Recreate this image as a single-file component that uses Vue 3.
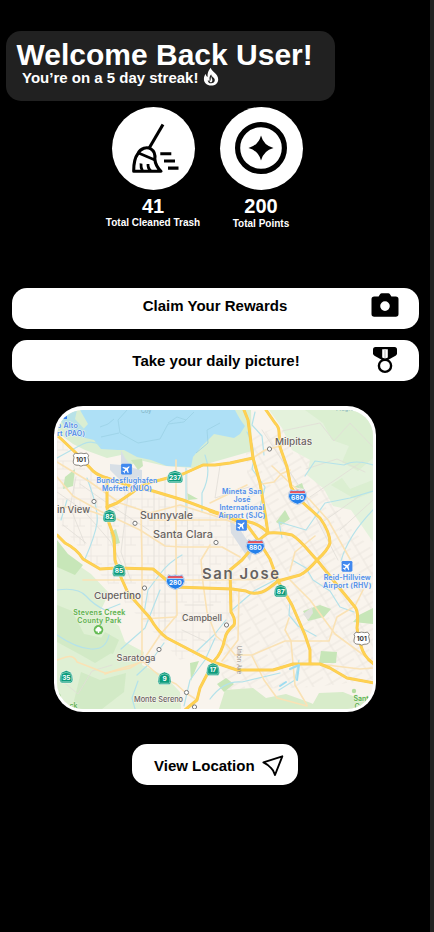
<script setup>
const freeways = [
  'M57 435L75 452L93 471Q99 476 107 478L133 487L153 491L183 500L215 512L230 517L253 523Q263 527 268 533Q280 532 292 535C302 541 309 552 317 560L337 585L355 607Q359 612 357 628Q360 648 365 655Q368 660 374 664',
  'M107 507L117 503Q126 497 133 492Q142 483 160 480L183 474L203 465L215 465L230 463L253 458',
  'M244 410L248 420L253 458L260 483L265 513L268 533Q258 540 253 547L242 560L230 570L231 612Q236 620 234 625Q226 632 225 638Q222 653 214 661L200 688L197 700L185 710',
  'M266 410L275 423Q279 427 279 432L280 447L287 467L291 487L300 500L320 518Q330 532 330 543Q328 550 317 560Q308 571 300 575L278 581Q266 591 262 592Q252 595 246 591L232 589L175 587L153 569L117 568L100 569L83 559Q77 549 65 543L57 535',
  'M107 478L107 507L109 523L114 537L115 560L119 573L128 593L150 618Q158 632 167 638L190 650L213 662L237 670L273 670L293 664L320 664L330 668L347 678L374 683',
  'M210 511L230 518L247 525L258 540L270 559L278 581L292 605L305 635L310 650L310 663',
]
const arterials = [
  'M57 462L90 482L120 503L150 513L180 505L215 516L235 523',
  'M57 477L73 496L100 511L140 530L165 546L182 547H222L240 557',
  'M57 507Q84 507 104 516',
  'M253 458L265 450L284 445',
  'M262 484L274 482L281 474L290 470M272 466L292 485L310 500L328 520L350 559',
  'M176 460V505V552L177 615L160 635L142 662L116 670L105 674',
  'M141 515L142 560V661L161 677L176 684L186 693L197 700',
  'M210 545L201 560L203 583L207 612L216 636L227 645',
  'M57 660L66 657Q74 655 77 662L90 667L105 673L130 668L142 661',
  'M83 580H210L280 579M150 520H228M142 619L176 617',
  'M227 645L235 655H252L285 641H329L337 617L355 606L363 590',
  'M290 580L310 600L335 634L373 662M289 618L285 630L291 641L293 664L295 685L307 705',
  'M252 656L264 680L277 698L307 706M239 590L238 640L222 661M310 663L360 669L373 668',
  'M210 503L247 485M290 571L295 552L315 536',
]
const creeks = [
  'M101 445Q91 440 83 444T57 458M87 478Q99 510 97 523T85 559M67 500L61 520',
  'M247 432Q257 450 252 469L265 487L260 507M255 412L252 425L262 436L264 455',
  'M57 590Q78 587 86 596T105 610L120 604M57 635Q76 648 91 649T109 635M182 555Q169 562 160 574L148 590L144 613M160 590L145 628L121 649M164 643L148 665L137 675',
  'M186 468V512M205 455Q212 474 202 493V512M373 465Q355 459 344 465L315 461L305 476M373 510Q348 536 341 561M373 491L350 498L325 503L315 517L306 530L279 522L282 538',
  'M210 699Q224 680 242 682L280 673M197 651L214 635L226 620M232 610L254 591L275 580M276 580L290 602L289 615L298 626L316 636M299 660L295 680L279 690',
  'M292 560L306 568L313 580L330 591L340 607L354 612M135 709L132 698L138 681M184 706L190 680L205 660L215 638',
]
const towns = [
  { t: 'Milpitas', x: 275, y: 445, w: 37, s: 9.3 },
  { t: 'Sunnyvale', x: 140, y: 519, w: 53, s: 10 },
  { t: 'Santa Clara', x: 153, y: 538, w: 60, s: 10 },
  { t: 'in View', x: 57, y: 512.5, w: 33, s: 9.5 },
  { t: 'Cupertino', x: 94, y: 599, w: 47, s: 9.5 },
  { t: 'Campbell', x: 182, y: 621, w: 40, s: 9 },
  { t: 'Saratoga', x: 116.5, y: 660.5, w: 39, s: 9.1 },
  { t: 'Monte Sereno', x: 134, y: 701.5, w: 49, s: 7.6 },
]
const dots = [[94, 501.5], [135, 523.3], [216, 542.5], [269.5, 449], [144.5, 588], [226.5, 625], [159, 649.5], [186.5, 692.5], [194.5, 707]]
const airports = [
  { lines: ['o Alto', 'rt (PAO)'], x: 57, y: 427.8, a: 'start' },
  { lines: ['Bundesflughafen', 'Moffett (NUQ)'], x: 127, y: 482.5, a: 'middle' },
  { lines: ['Mineta San', 'José', 'International', 'Airport (SJC)'], x: 242, y: 493.5, a: 'middle' },
  { lines: ['Reid-Hillview', 'Airport (RHV)'], x: 347.3, y: 579.5, a: 'middle' },
]
const planes = [[126.5, 469.2], [241.5, 525.3], [347, 566.3]]
const stateRoutes = [
  { n: '237', x: 175, y: 477 }, { n: '82', x: 109.5, y: 516 }, { n: '85', x: 119, y: 570.5 },
  { n: '87', x: 280.7, y: 591 }, { n: '17', x: 213, y: 669.5 }, { n: '9', x: 164.5, y: 678.5 }, { n: '35', x: 66.3, y: 677 },
]
const interstates = [{ n: '680', x: 297.5, y: 497 }, { n: '880', x: 255.3, y: 547 }, { n: '280', x: 175.3, y: 582 }]
const usRoutes = [[81, 459.5], [361.7, 638.5]]
</script>

<template>
  <main class="screen">
    <header class="welcome">
      <h1>Welcome Back User!</h1>
      <p>
        You’re on a 5 day streak!
        <svg class="flame" viewBox="0 0 16 20">
          <path d="M7.8 .8C8.1 4.2 15.2 6.6 15.2 12.2C15.2 16.2 12.2 18.6 8.1 18.6S.9 16 .9 12.1C.9 9.6 1.8 7.9 2.8 7C3 8.5 3.6 9.5 4.6 10C4.3 6.4 5.2 3.2 7.8 .8Z" fill="#fff" />
          <path d="M8.2 7.2C8 9.7 12 10.4 11.8 13.3C11.7 15.2 10.2 16.3 8.2 16.3C6 16.3 4.7 14.9 4.8 12.9C5.5 13.7 6.1 13.9 6.8 13.6C6.1 11.2 6.4 9 8.2 7.2Z" fill="#212121" />
          <path d="M8.3 9.3C8.1 11.3 9.8 12.3 9.3 14C8.9 15.2 7.5 15.6 6.4 14.8C8.3 13.8 7.3 11.3 8.3 9.3Z" fill="#fff" />
        </svg>
      </p>
    </header>

    <section class="stats">
      <div class="stat trash">
        <div class="disc">
          <svg viewBox="0 0 83 83" fill="none" stroke="#000" stroke-width="3.1">
            <path d="M51 17.5L37.2 41" />
            <path d="M26 46.5C28.5 41 35 39.5 39 42C43 44.5 43.3 48 42.8 52C43.3 57.5 45.5 61 49 64.3H21.7C21.6 57 22.5 51 26 46.5Z" stroke-linejoin="round" />
            <path d="M26.5 46L43 53" stroke-width="2.6" />
            <path d="M29 56.5Q28.6 60.5 30.5 64M36 57Q35.7 61.5 39 64" stroke-width="2.8" />
            <path d="M48.3 46.8H59.3M52 54H63M56 61.1H66.5" />
          </svg>
        </div>
        <strong>41</strong>
        <span>Total Cleaned Trash</span>
      </div>
      <div class="stat points">
        <div class="disc">
          <svg viewBox="0 0 83 83">
            <circle cx="41" cy="41" r="23.4" fill="none" stroke="#000" stroke-width="5.2" />
            <path d="M41 28.5Q43.6 38.4 53.5 41Q43.6 43.6 41 53.5Q38.4 43.6 28.5 41Q38.4 38.4 41 28.5Z" />
          </svg>
        </div>
        <strong>200</strong>
        <span>Total Points</span>
      </div>
    </section>

    <nav class="actions">
      <button class="action rewards">
        <span>Claim Your Rewards</span>
        <svg viewBox="0 0 28 28">
          <path fill-rule="evenodd" d="M3.2 4.5H7.6L9.2 2.1Q9.7 1.3 10.7 1.3H17.3Q18.3 1.3 18.8 2.1L20.4 4.5H24.8Q27.5 4.5 27.5 7.2V22Q27.5 24.7 24.8 24.7H3.2Q.5 24.7 .5 22V7.2Q.5 4.5 3.2 4.5ZM14 9.3A4.8 4.8 0 1 0 14 18.9A4.8 4.8 0 1 0 14 9.3Z" />
        </svg>
      </button>
      <button class="action daily">
        <span>Take your daily picture!</span>
        <svg viewBox="0 0 28 28">
          <path d="M4.5 1H23.5Q26 1 26 3.5V7.2Q26 8.8 24.5 9.8L17 14H11L3.5 9.8Q2 8.8 2 7.2V3.5Q2 1 4.5 1Z" />
          <path d="M11.2 3.2H16.8V11.5L14 12.7L11.2 11.5Z" fill="#fff" />
          <path d="M13 3.4H15V12H13Z" fill="#d9d9d9" />
          <circle cx="14" cy="19.8" r="6.1" fill="#fff" stroke="#000" stroke-width="2.4" />
        </svg>
      </button>
    </nav>

    <div class="map">
      <svg viewBox="57 410 316 299">
        <defs>
          <pattern id="westGrid" width="17" height="19" patternUnits="userSpaceOnUse">
            <path d="M0 5H17M6 0V19M6 13H17M12 5V13" fill="none" stroke="#ebe6df" stroke-width=".8" />
          </pattern>
          <pattern id="eastGrid" width="18" height="16" patternUnits="userSpaceOnUse" patternTransform="rotate(-31)">
            <path d="M0 4H18M5 0V16M5 11H18" fill="none" stroke="#e8e3dc" stroke-width=".8" />
          </pattern>
        </defs>
        <rect x="57" y="410" width="316" height="299" fill="#f9f4ed" />
        <path d="M57 440L75 449L96 472L130 487L245 525L227 645L180 660L113 590L57 520Z" fill="url(#westGrid)" />
        <path d="M245 440L284 424L317 466L342 520L373 550V680L315 687L220 690L232 570L251 525Z" fill="url(#eastGrid)" />
        <path d="M57 410H251L252 451L217 461L193 468L165 466L139 460L130 466L121 455L107 458L85 450L73 444L57 432Z" fill="#daeed2" />
        <path d="M269 410H373V542L362 526L351 510L333 506L324 489L307 475L310 460L292 450L282 428Z" fill="#e4f2dc" />
        <path d="M305 410L323 423L332 440L349 446L342 462L358 471L373 458V410ZM331 485L342 478L350 489L373 480V492L355 499Z" fill="#d6edcb" opacity=".65" />
        <path d="M57 562L78 565L91 574L109 593L100 612L119 626L125 642L144 652L142 665L165 676L180 692L181 709H57Z" fill="#dff0d4" />
        <path d="M57 605L72 611L84 634L103 638L113 652L95 663L81 655L57 642ZM105 632L119 640L113 654L94 649ZM81 672L100 680L126 673L124 692L102 709H72Z" fill="#cee9c2" opacity=".8" />
        <path d="M219 709L225 690L253 688L266 698L286 694L311 703L322 709ZM310 709L319 693L343 692L373 704V709Z" fill="#d8ecca" />
        <path d="M57 540L68 554L83 565L75 575L57 567ZM65 477L75 469L73 486L63 489ZM187 493L198 499L188 500ZM110 532L116 529L120 543L113 545ZM276 522L285 510L290 519L281 525ZM294 487L302 483L304 489ZM303 611L320 605L331 609L324 617L308 621ZM321 651L337 652L336 663H319ZM359 615L373 608V624L353 622ZM190 663L199 661L191 681ZM217 684L226 678L234 684L224 692Z" fill="#c7e6b8" />
        <path d="M80 410H235Q240 420 245 426L240 434L234 438L214 434L201 447L193 457L191 467L167 466L151 460L137 457L124 450L118 450L101 449L94 440L77 436L88 424Z" fill="#aee0f6" />
        <path d="M57 410H77L75 419L87 432L72 435L60 420Z" fill="#b8e2e8" />
        <path d="M127 410L118 420L120 433L138 443L160 439L168 424L184 422L194 412M168 423L177 417L186 420M100 427L108 424L114 419M101 437L119 433M196 453L208 443L207 430L220 423" fill="none" stroke="#9dd2e6" stroke-width=".9" />
        <path d="M121 450L125 458L133 468L142 470L142 480L120 480L110 470L110 464L121 465Z" fill="#d8dfe6" />
        <path d="M230 520L239 528L253 549L250 561L231 533Z" fill="#d8dee5" />
        <path d="M131 460L142 459L143 466L138 470Z" fill="#cbe6bd" />
        <path d="M303 614L312 607L313 613L308 620Z" fill="#e2e2dd" />
        <g fill="none" stroke-linecap="round" stroke-linejoin="round">
          <path d="M57 492L83 510L110 541L122 565M80 484L113 507L149 530M63 525L86 543M76 477L70 507L85 544M130 478L121 552L131 581M154 491V616M165 480L165 632M187 470L188 576M61 680L78 694L92 671L112 665M182 630L207 642M185 605H213M220 466L215 498L249 487M262 430L301 489L338 560M282 431L320 423L334 441L350 423L373 447M306 469L337 459L365 472M310 497L363 461M324 521L361 495M340 530L373 500" stroke="#e1ddd7" stroke-width=".8" />
          <path v-for="d in creeks" :key="d" :d="d" stroke="#b4e2ea" stroke-width="1.2" />
          <path v-for="d in arterials" :key="d" :d="d" stroke="#fae2b5" stroke-width="1.6" />
          <path v-for="d in freeways" :key="d" :d="d" stroke="#f8ca55" stroke-width="3" />
          <path v-for="d in freeways" :key="'i' + d" :d="d" stroke="#ffd251" stroke-width="2" />
          <path d="M290 669L299 665L297 680M286 682L280 686" stroke="#9ddcf0" stroke-width="2" />
        </g>
        <g class="town">
          <text v-for="c in towns" :key="c.t" :x="c.x" :y="c.y" :font-size="c.s" :textLength="c.w" lengthAdjust="spacingAndGlyphs">{{ c.t }}</text>
          <text class="city" x="202" y="578.5" font-size="14.8" textLength="77">San Jose</text>
        </g>
        <circle v-for="d in dots" :key="d.join()" :cx="d[0]" :cy="d[1]" r="2.1" fill="#fff" stroke="#777" stroke-width="1" />
        <g class="airport">
          <text v-for="p in airports" :key="p.y" :text-anchor="p.a">
            <tspan v-for="(l, i) in p.lines" :key="l" :x="p.x" :y="p.y + i * 8.2">{{ l }}</tspan>
          </text>
        </g>
        <path d="M61 419L67 414V419Z" fill="#347df3" />
        <g v-for="p in planes" :key="p.join()" :transform="`translate(${p[0]} ${p[1]})`">
          <rect x="-5.4" y="-5.4" width="10.8" height="10.8" rx="1.4" fill="#4189ef" />
          <path transform="rotate(45)" d="M0-4.3Q.9-3.7.8-1.2L4 .9V1.9L.8 1L.5 3L1.7 3.8V4.4L0 4L-1.7 4.4V3.8L-.5 3L-.8 1L-4 1.9V.9L-.8-1.2Q-.9-3.7 0-4.3Z" fill="#fff" />
        </g>
        <g class="park">
          <text x="99.3" y="615" text-anchor="middle" textLength="52">Stevens Creek</text>
          <text x="99.3" y="622.7" text-anchor="middle" textLength="44">County Park</text>
          <text x="353.5" y="700.5">Sant</text>
          <text x="354.5" y="708.5">Co</text>
          <text x="69.5" y="708">ck</text>
          <circle cx="98.5" cy="629.8" r="4.8" fill="#65bb55" />
          <path d="M97.8 633V631.4H96.6A1.6 1.6 0 0 1 96.5 628.3A2 2 0 0 1 100.4 628.3A1.6 1.6 0 0 1 100.4 631.4H99.2V633Z" fill="#fff" />
          <circle cx="354" cy="691" r="2.2" fill="#b5dda1" />
          <path d="M57 692Q62 694 60 698L57 700Z" fill="#68bb51" />
        </g>
        <g class="shield">
          <g v-for="r in stateRoutes" :key="r.n" :transform="`translate(${r.x} ${r.y})`">
            <path d="M0-6.6Q2.5-5.8 4.7-4.6Q6.7-1.5 6.6 3Q6.4 5.8 4.4 5.9H-4.4Q-6.4 5.8-6.6 3Q-6.7-1.5-4.7-4.6Q-2.5-5.8 0-6.6Z" :transform="r.n.length > 2 ? 'scale(1.2 1)' : ''" fill="#0c9b7c" stroke="#fff" stroke-width=".5" />
            <path d="M-4.5-3.3Q0-5.9 4.5-3.3Q5.7 0 5.3 3.5Q5 4.7 4 4.7H-4Q-5 4.7-5.3 3.5Q-5.7 0-4.5-3.3Z" :transform="r.n.length > 2 ? 'scale(1.2 1)' : ''" fill="none" stroke="#b7e6d9" stroke-width=".6" />
            <text y="2.7" text-anchor="middle" fill="#fff">{{ r.n }}</text>
          </g>
          <g v-for="r in interstates" :key="r.n" :transform="`translate(${r.x} ${r.y})`">
            <path d="M-6.5-7Q-3-5.8 0-6.8Q3-5.8 6.5-7Q9-3.8 9-.7Q8 5 0 7.3Q-8 5-9-.7Q-9-3.8-6.5-7Z" fill="#2480ea" stroke="#a9b6cc" stroke-width="1.3" />
            <path d="M-6.5-7Q-3-5.8 0-6.8Q3-5.8 6.5-7Q9-3.8 9-.7Q8 5 0 7.3Q-8 5-9-.7Q-9-3.8-6.5-7Z" fill="#2480ea" stroke="#fff" stroke-width=".6" />
            <path d="M-6.7-6.3Q-3-5.1 0-6.1Q3-5.1 6.7-6.3L7.9-3.8H-7.9Z" fill="#f05258" />
            <path d="M-8.1-3.4H8.1" stroke="#fff" stroke-width=".7" />
            <text y="3" text-anchor="middle" fill="#fff">{{ r.n }}</text>
          </g>
          <g v-for="p in usRoutes" :key="p.join()" :transform="`translate(${p[0]} ${p[1]})`">
            <path d="M-5.7-6.4Q-3-5.3 0-6.4Q3-5.3 5.7-6.4L7.6-4.2Q6.3-1.8 7.5.5Q8.6 4.8 5 5.6Q2 5.4 0 6.7Q-2 5.4-5 5.6Q-8.6 4.8-7.5.5Q-6.3-1.8-7.6-4.2Z" fill="#fff" stroke="#6f6962" stroke-width=".8" />
            <text y="2.5" text-anchor="middle" fill="#333">101</text>
          </g>
        </g>
        <text class="street" transform="translate(237 646) rotate(90)" textLength="28">Union Ave</text>
        <text class="creek" x="141" y="413">Coy</text>
        <text class="creek" x="336" y="411" textLength="23">Flugfeld</text>
      </svg>
    </div>

    <button class="location">
      <span>View Location</span>
      <svg viewBox="0 0 22 22" fill="none" stroke="#000" stroke-width="1.9" stroke-linejoin="round">
        <path d="M1.4 7.3L20.3 1.3L13 20Q11.5 15 9 13Q6 9.5 1.4 7.3Z" />
      </svg>
    </button>
  </main>
</template>

<style>
body {
  margin: 0;
  background: #000;
}
</style>

<style scoped>
.screen {
  box-sizing: border-box;
  height: 932px;
  padding-top: 31px;
  overflow: hidden;
  border-right: 4px solid #212121;
  background: #000;
  color: #fff;
  font-family: "Liberation Sans", Arial, sans-serif;
  font-weight: 700;
}
.welcome {
  box-sizing: border-box;
  width: 329px;
  height: 70px;
  margin-left: 6px;
  padding: 7px 0 0 10px;
  border-radius: 15px;
  background: #212121;
}
h1 {
  margin: 0;
  padding-left: 0.5px;
  font-size: 30px;
  line-height: 34px;
  white-space: nowrap;
}
p {
  display: flex;
  height: 20px;
  margin: -4px 0 0 6px;
  align-items: center;
  gap: 5px;
  font-size: 15px;
  line-height: 20px;
}
.flame {
  width: 16px;
  height: 20px;
  margin-top: -2px;
}
.stats {
  display: flex;
  height: 181px;
  margin-left: 99px;
  padding-top: 6px;
}
.stat {
  display: flex;
  width: 108px;
  flex-direction: column;
  align-items: center;
}
.disc {
  width: 83px;
  height: 83px;
  border-radius: 50%;
  background: #fff;
}
.disc svg {
  display: block;
  width: 83px;
  height: 83px;
}
.stat strong {
  margin-top: 5px;
  font-size: 20px;
  line-height: 23px;
}
.stat span {
  font-size: 10px;
  line-height: 12px;
  white-space: nowrap;
}
.trash span {
  margin-top: -1px;
}
.actions {
  display: flex;
  flex-direction: column;
  gap: 11px;
  padding: 0 11px 0 12px;
}
button {
  border: 0;
  background: #fff;
  color: #000;
  font: inherit;
  font-size: 15px;
}
.action {
  display: grid;
  height: 41px;
  padding: 0 20px 2px 49px;
  grid-template-columns: 1fr 28px;
  align-items: center;
  border-radius: 15px;
}
.action svg {
  width: 28px;
  height: 28px;
}
.daily span {
  padding-top: 2px;
}
.rewards {
  padding-bottom: 5px;
  padding-left: 47px;
}
.rewards span {
  padding-bottom: 2px;
}
.map {
  box-sizing: border-box;
  width: 322px;
  height: 306px;
  margin: 25px 0 0 54px;
  padding: 4px 3px 3px;
  overflow: hidden;
  border-radius: 29px;
  background: #fff;
}
.map svg {
  display: block;
  width: 316px;
  height: 299px;
  border-radius: 26px;
}
.map text {
  font-family: Inter, "Open Sans", sans-serif;
  paint-order: stroke;
  stroke-linejoin: round;
}
.town text {
  fill: #67625f;
  stroke: #faf6ef;
  stroke-width: 1.2px;
  font-weight: 500;
}
.town .city {
  font-weight: 600;
}
.airport text {
  fill: #4e8ce8;
  stroke: #f2f5f5;
  stroke-width: 1px;
  font-size: 7px;
  font-weight: 600;
  letter-spacing: 0.2px;
}
.park text {
  fill: #5cb04d;
  stroke: #e7f3dd;
  stroke-width: 1px;
  font-size: 7px;
  font-weight: 600;
}
.shield text {
  font-size: 6.5px;
  font-weight: 700;
}
.map .street {
  fill: #8d8882;
  font-size: 5.7px;
  font-weight: 400;
}
.map .creek {
  fill: #7baebc;
  font-size: 5.5px;
  font-weight: 400;
}
.location {
  display: flex;
  width: 166px;
  height: 41px;
  margin: 32px 0 0 132px;
  padding: 2px 14px 0 22px;
  align-items: center;
  justify-content: space-between;
  border-radius: 15px;
  white-space: nowrap;
}
.location svg {
  width: 22px;
  height: 22px;
}
</style>
